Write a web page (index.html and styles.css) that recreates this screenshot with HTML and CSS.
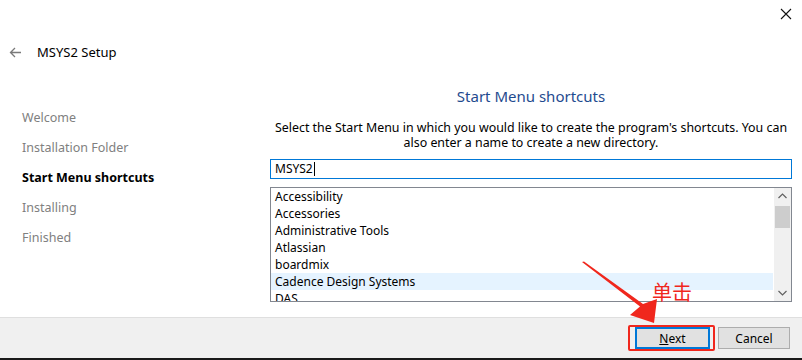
FILE: index.html
```html
<!DOCTYPE html>
<html>
<head>
    <title>MSYS2 Setup</title>
    <link rel="stylesheet" href="styles.css">
</head>
<body>
    <div class="window">
        <div class="titlebar">
            <svg class="close" width="12" height="12" viewBox="0 0 12 12">
                <path d="M1 1 L11 11 M11 1 L1 11" stroke="#111" stroke-width="1.1" fill="none"/>
            </svg>
        </div>

        <div class="header">
            <svg class="back" width="13" height="11" viewBox="0 0 13 11">
                <path d="M12 5.5 H1.5 M6 1 L1.5 5.5 L6 10" stroke="#7a7a7a" stroke-width="1.3" fill="none"/>
            </svg>
            <span class="title">MSYS2 Setup</span>
        </div>

        <div class="main">
            <ul class="steps">
                <li>Welcome</li>
                <li>Installation Folder</li>
                <li class="current">Start Menu shortcuts</li>
                <li>Installing</li>
                <li>Finished</li>
            </ul>

            <div class="content">
                <h2>Start Menu shortcuts</h2>
                <p class="desc">Select the Start Menu in which you would like to create the program's shortcuts. You can<br>also enter a name to create a new directory.</p>
                <div class="field">MSYS2<span class="caret"></span></div>
                <div class="list">
                    <ul class="items">
                        <li>Accessibility</li>
                        <li>Accessories</li>
                        <li>Administrative Tools</li>
                        <li>Atlassian</li>
                        <li>boardmix</li>
                        <li class="hover">Cadence Design Systems</li>
                        <li>DAS</li>
                    </ul>
                    <div class="scrollbar">
                        <svg class="chev" width="17" height="17" viewBox="0 0 17 17">
                            <path d="M4.5 10 L8.5 6 L12.5 10" stroke="#606060" stroke-width="1.2" fill="none"/>
                        </svg>
                        <div class="track"><div class="thumb"></div></div>
                        <svg class="chev" width="17" height="17" viewBox="0 0 17 17">
                            <path d="M4.5 7 L8.5 11 L12.5 7" stroke="#606060" stroke-width="1.2" fill="none"/>
                        </svg>
                    </div>
                </div>
            </div>
        </div>

        <div class="footer">
            <div class="marked">
                <button class="btn default"><u>N</u>ext</button>
            </div>
            <button class="btn">Cancel</button>
        </div>

        <!-- red annotation over the dialog -->
        <svg class="pointer" width="802" height="360" viewBox="0 0 802 360">
            <polygon points="582,262 584,261.5 643,304 657,299 654,323 630,315 640,306.5" fill="#f0271d"/>
        </svg>
        <span class="note">单击</span>
    </div>
</body>
</html>
```

FILE: styles.css
```css
body {
    margin: 0;
    font-family: "Noto Sans", "Noto Sans CJK SC", sans-serif;
    font-size: 12px;
    color: #000;
    background: #fff;
}

.window {
    position: relative;
    width: 802px;
    height: 360px;
    display: flex;
    flex-direction: column;
    overflow: hidden;
    background: #fff;
}

.titlebar {
    height: 40px;
    display: flex;
    justify-content: flex-end;
    align-items: flex-start;
    padding: 8px 10px 0 0;
    box-sizing: border-box;
}

.header {
    height: 24px;
    display: flex;
    align-items: center;
    padding-left: 9px;
}

.back {
    margin-right: 15px;
}

.title {
    font-size: 13px;
}

.main {
    flex: 1;
    display: flex;
}

.steps {
    list-style: none;
    margin: 0;
    padding: 39px 0 0 22px;
    width: 248px;
}

.steps li {
    height: 30px;
    line-height: 30px;
    color: #808080;
    font-size: 12.5px;
}

.steps li.current {
    color: #000;
    font-weight: bold;
}

.content {
    width: 522px;
    display: flex;
    flex-direction: column;
}

h2 {
    margin: 22px 0 0;
    font-size: 15px;
    font-weight: normal;
    line-height: 20px;
    text-align: center;
    color: #1f4b8f;
}

.desc {
    margin: 14px 0 0;
    font-size: 12.4px;
    line-height: 15px;
    text-align: center;
    white-space: nowrap;
}

.field {
    margin-top: 9px;
    height: 20px;
    border: 1px solid #0078d7;
    box-sizing: border-box;
    padding-left: 4px;
    line-height: 18px;
    display: flex;
    align-items: center;
}

.caret {
    width: 1px;
    height: 14px;
    background: #000;
    margin-left: 1px;
}

.list {
    margin-top: 8px;
    height: 115px;
    border: 1px solid #828790;
    box-sizing: border-box;
    display: flex;
    overflow: hidden;
}

.items {
    flex: 1;
    list-style: none;
    margin: 0;
    padding: 0 1px 0 0;
}

.items li {
    height: 17px;
    line-height: 17px;
    padding-left: 4px;
}

.items li.hover {
    background: #e5f3ff;
}

.scrollbar {
    width: 17px;
    background: #f0f0f0;
    display: flex;
    flex-direction: column;
}

.chev {
    flex: none;
}

.track {
    flex: 1;
}

.thumb {
    margin: 1px 1px 0;
    height: 22px;
    background: #cdcdcd;
}

.footer {
    height: 40px;
    margin-bottom: 2px;
    background: #f0f0f0;
    border-top: 1px solid #dfdfdf;
    display: flex;
    justify-content: flex-end;
    align-items: center;
    padding-right: 12px;
    gap: 3px;
}

.window::after {
    content: "";
    position: absolute;
    left: 0;
    right: 0;
    bottom: 0;
    height: 2px;
    background: #1a1a1a;
}

.marked {
    border: 2px solid #f0271d;
    border-radius: 2px;
    padding: 0 3px 0 5px;
    height: 22px;
    display: flex;
    align-items: center;
}

.btn {
    width: 72px;
    height: 22px;
    border: 1px solid #adadad;
    background: #e1e1e1;
    font-family: inherit;
    font-size: 12px;
    color: #000;
    padding: 0;
}

.btn.default {
    width: 75px;
    border: 2px solid #0078d7;
}

.pointer {
    position: absolute;
    left: 0;
    top: 0;
    pointer-events: none;
}

.note {
    position: absolute;
    left: 652px;
    top: 280px;
    font-size: 20px;
    line-height: 24px;
    color: #f0271d;
    font-family: "Noto Sans CJK SC", sans-serif;
}
```
